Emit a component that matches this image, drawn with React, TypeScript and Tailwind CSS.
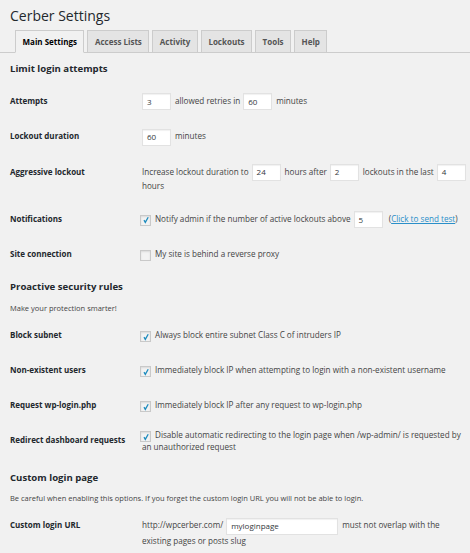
const font = { fontFamily: '"Open Sans", "Noto Sans", sans-serif' }

const Field = ({ value, w = 'w-[29px]', first = false }: { value: string; w?: string; first?: boolean }) => (
    <span className={`inline-flex align-middle items-center h-[17px] -my-[2px] ${w} bg-white border border-[#e2e2e2] shadow-[inset_0_1px_1px_rgba(0,0,0,0.06)] px-[4px] text-[8px] text-[#32373c] ${first ? 'mr-[4px]' : 'ml-[3px] mr-[4px]'}`}>
        {value}
    </span>
)

const Check = ({ on = true }: { on?: boolean }) => (
    <span className="inline-flex align-middle items-center justify-center w-[11px] h-[11px] -my-[2px] bg-[#f3f3f3] border border-[#c9c9c9] shadow-[inset_0_1px_2px_rgba(0,0,0,0.1)] mr-[4px] -ml-[2px] -mt-[1px]">
        {on && (
            <svg width="8" height="8" viewBox="0 0 8 8">
                <path d="M2 4.2 L3.3 6.4 L6.2 1.2" stroke="#1e8cbe" strokeWidth="1.3" fill="none" />
            </svg>
        )}
    </span>
)

const Row = ({ label, children, cls = 'py-[10.5px]' }: { label: string; children: React.ReactNode; cls?: string }) => (
    <div className={`flex ${cls}`}>
        <div className="w-[132px] shrink-0 font-bold text-[8px] leading-[14px] text-[#23282d]">{label}</div>
        <div className="flex-1 text-[8.15px] leading-[14px] text-[#444]">{children}</div>
    </div>
)

const tabs = ['Main Settings', 'Access Lists', 'Activity', 'Lockouts', 'Tools', 'Help']

export default function App() {
    return (
        <div className="w-[470px] h-[553px] overflow-hidden bg-[#f1f1f1]" style={font}>
            <h1 className="text-[14px] leading-[18px] text-[#23282d] pt-[7px] pl-[10px]">Cerber Settings</h1>
            <div className="flex gap-[3px] mt-[5px] pl-[15px] border-b border-[#ccc]">
                {tabs.map((t, i) => (
                    <div
                        key={t}
                        className={`px-[6.5px] h-[23px] flex items-center border border-[#ccc] text-[8px] font-bold -mb-[1px] ${i === 0 ? 'bg-[#f1f1f1] border-b-[#f1f1f1] text-[#000]' : 'bg-[#e4e4e4] text-[#555]'}`}
                    >
                        {t}
                    </div>
                ))}
            </div>

            <div className="pl-[10px]">
                <h2 className="font-bold text-[9.6px] text-[#23282d] mt-[9px] leading-[14px]">Limit login attempts</h2>

                <div className="mt-[7.5px]">
                    <Row label="Attempts">
                        <Field value="3" first />allowed retries in<Field value="60" />minutes
                    </Row>
                    <Row label="Lockout duration">
                        <Field value="60" first />minutes
                    </Row>
                    <Row label="Aggressive lockout" cls="pt-[10.5px] pb-[8.5px]">
                        <span className="whitespace-nowrap">
                            Increase lockout duration to<Field value="24" />hours after<Field value="2" />lockouts in the last<Field value="4" />
                        </span>
                        <br />hours
                    </Row>
                    <Row label="Notifications">
                        <Check />Notify admin if the number of active lockouts above<Field value="5" />{' '}
                        (<span className="text-[#2a8fc9] underline">Click to send test</span>)
                    </Row>
                    <Row label="Site connection">
                        <Check on={false} />My site is behind a reverse proxy
                    </Row>
                </div>

                <h2 className="font-bold text-[9.6px] text-[#23282d] mt-[8.5px] leading-[14px]">Proactive security rules</h2>
                <p className="text-[7.5px] leading-[10px] text-[#444] mt-[9px]">Make your protection smarter!</p>

                <div className="mt-[4.5px]">
                    <Row label="Block subnet">
                        <Check />Always block entire subnet Class C of intruders IP
                    </Row>
                    <Row label="Non-existent users">
                        <Check />Immediately block IP when attempting to login with a non-existent username
                    </Row>
                    <Row label="Request wp-login.php">
                        <Check />Immediately block IP after any request to wp-login.php
                    </Row>
                    <Row label="Redirect dashboard requests">
                        <span className="leading-[12px] block -mt-[4px] pr-[3px]">
                            <Check />Disable automatic redirecting to the login page when /wp-admin/ is requested by an unauthorized request
                        </span>
                    </Row>
                </div>

                <h2 className="font-bold text-[9.6px] text-[#23282d] mt-[7.5px] leading-[14px]">Custom login page</h2>
                <p className="text-[7.5px] leading-[10px] text-[#444] mt-[8px]">Be careful when enabling this options. If you forget the custom login URL you will not be able to login.</p>

                <div className="mt-[4.5px]">
                    <Row label="Custom login URL">
                        <span className="leading-[16px] block -mt-[1px]">
                            http://wpcerber.com/<Field value="myloginpage" w="w-[112px]" />must not overlap with the
                            <br />existing pages or posts slug
                        </span>
                    </Row>
                </div>
            </div>
        </div>
    )
}
